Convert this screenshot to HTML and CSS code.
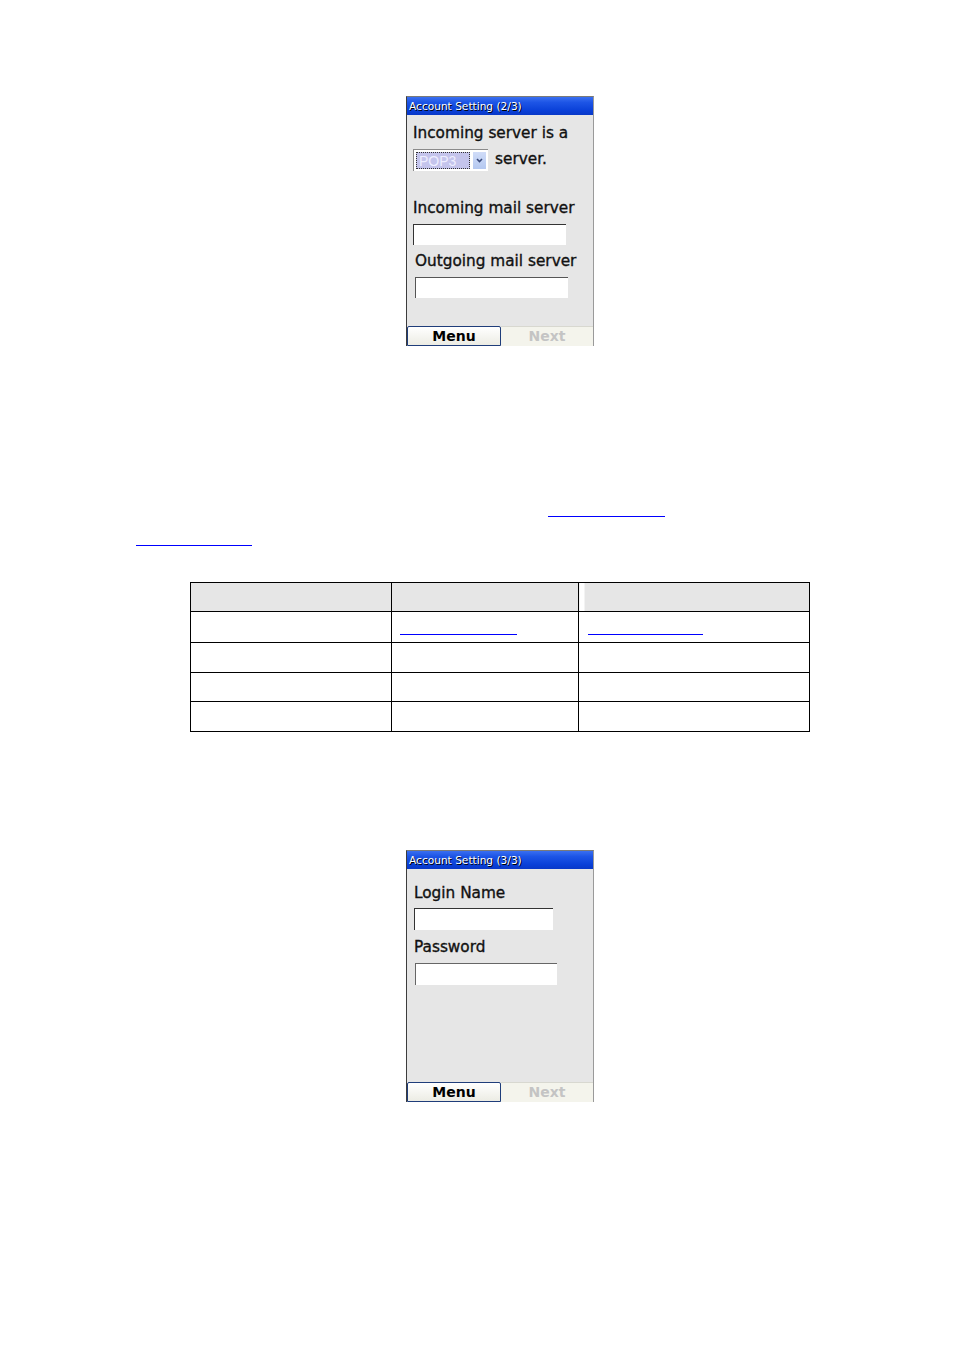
FILE: index.html
```html
<!DOCTYPE html>
<html>
<head>
<meta charset="utf-8">
<link rel="stylesheet" href="styles.css">
</head>
<body>
<div class="page">
  <div class="phone phone-a">
    <div class="titlebar">Account Setting (2/3)</div>
    <div class="screen">
      <div class="lbl l1">Incoming server is a</div>
      <div class="row-sel">
        <div class="select"><span class="sel-val">POP3</span><span class="sel-btn"><svg width="9" height="7" viewBox="0 0 9 7"><path d="M2 2 L4.5 4.5 L7 2" fill="none" stroke="#3a4a7a" stroke-width="1.6"/></svg></span></div>
        <span class="lbl sel-after">server.</span>
      </div>
      <div class="lbl l2">Incoming mail server</div>
      <div class="input in1"></div>
      <div class="lbl l3">Outgoing mail server</div>
      <div class="input in2"></div>
    </div>
    <div class="softkeys"><div class="sk sk-menu">Menu</div><div class="sk sk-next">Next</div></div>
  </div>

  <div class="links">
    <div class="link-line la"><span class="ulink"></span></div>
    <div class="link-line lb"><span class="ulink"></span></div>
  </div>

  <table class="tbl">
    <tr class="hdr"><td class="c1"></td><td class="c2"></td><td class="c3"></td></tr>
    <tr><td></td><td><span class="ulink t1"></span></td><td><span class="ulink t2"></span></td></tr>
    <tr><td></td><td></td><td></td></tr>
    <tr><td></td><td></td><td></td></tr>
    <tr><td></td><td></td><td></td></tr>
  </table>

  <div class="phone phone-b">
    <div class="titlebar">Account Setting (3/3)</div>
    <div class="screen">
      <div class="lbl m1">Login Name</div>
      <div class="input in3"></div>
      <div class="lbl m2">Password</div>
      <div class="input in4"></div>
    </div>
    <div class="softkeys"><div class="sk sk-menu">Menu</div><div class="sk sk-next">Next</div></div>
  </div>
</div>
</body>
</html>
```

FILE: styles.css
```css
html, body { margin: 0; padding: 0; background: #fff; }
.page { width: 954px; height: 1351px; position: relative; overflow: hidden; font-family: "DejaVu Sans", Verdana, sans-serif; }

.phone { margin-left: 406px; width: 188px; background: #e6e6e6; border-left: 1px solid #3c3c3c; border-right: 1px solid #9a9a9a; border-top: 1px solid #7a7a7a; box-sizing: border-box; display: flex; flex-direction: column; }
.phone-a { margin-top: 96px; height: 250px; }
.phone-b { position: absolute; top: 850px; left: 0; height: 252px; }

.titlebar { height: 18px; flex: none; background: linear-gradient(#3a6ff0 0%, #1d55e6 30%, #0a40d8 75%, #0838c8 100%); color: #fff; font-family: "DejaVu Sans", sans-serif; font-size: 10.6px; line-height: 18px; padding-left: 2px; text-shadow: 1px 1px 0 #000; white-space: nowrap; overflow: hidden; }
.screen { flex: 1; position: relative; }

.lbl { font-size: 15.3px; color: #111; line-height: 17px; white-space: nowrap; -webkit-text-stroke: 0.35px #111; }
.l1 { margin: 10px 0 0 6px; }
.row-sel { display: flex; align-items: center; margin: 7px 0 0 6px; }
.select { width: 75px; height: 22px; box-sizing: border-box; background: #fff; border-top: 1px solid #8a8a8a; border-left: 1px solid #8a8a8a; display: flex; padding: 2px; gap: 2px; }
.sel-val { width: 56px; box-sizing: border-box; background: #c4c4ec; border: 1px dotted #333; color: #eef; font-family: "Liberation Sans", Arial, sans-serif; font-size: 14px; line-height: 16px; padding-left: 2px; }
.sel-btn { width: 13px; background: linear-gradient(#d0dcf8, #b4c8f0); display: flex; align-items: center; justify-content: center; margin-left: 1px; }
.sel-after { margin-left: 7px; margin-top: -2px; }
.l2 { margin: 29px 0 0 6px; }
.input { height: 21px; background: #fff; border-top: 1px solid #333; border-left: 1px solid #333; box-sizing: border-box; }
.in1 { margin: 7px 0 0 6px; width: 153px; }
.l3 { margin: 8px 0 0 8px; }
.in2 { margin: 7px 0 0 8px; width: 153px; border-color: #555; }
.m1 { margin: 16px 0 0 7px; }
.in3 { margin: 6px 0 0 7px; width: 139px; height: 22px; }
.m2 { margin: 9px 0 0 7px; }
.in4 { margin: 7px 0 0 8px; width: 142px; height: 22px; border-color: #666; }

.softkeys { height: 20px; flex: none; display: flex; }
.sk { height: 20px; box-sizing: border-box; font-family: "DejaVu Sans", sans-serif; font-weight: bold; font-size: 14px; line-height: 19px; text-align: center; }
.sk-menu { width: 94px; border: 1px solid #1f3d7a; border-radius: 2px 2px 0 0; background: linear-gradient(#ffffff, #ecece4); color: #000; }
.sk-next { flex: 1; background: #f4f4ec; color: #c4c4c4; border-top: 1px solid #d8d8d0; }

.links { height: 200px; position: relative; }
.link-line { position: absolute; }
.ulink { display: block; height: 1px; background: #0000ff; }
.la { left: 548px; top: 170px; width: 117px; }
.la .ulink { width: 117px; }
.lb { left: 136px; top: 199px; width: 116px; }
.lb .ulink { width: 116px; }

.tbl { position: absolute; left: 190px; top: 582px; width: 620px; border-collapse: collapse; }
.tbl td { border: 1px solid #000; padding: 0; vertical-align: bottom; }
.tbl tr:nth-child(1) td { height: 28px; }
.tbl tr:nth-child(2) td { height: 30px; }
.tbl tr:nth-child(3) td { height: 29px; }
.tbl tr:nth-child(4) td { height: 28px; }
.tbl tr:nth-child(5) td { height: 29px; }
.tbl .c1 { width: 200px; }
.tbl .c2 { width: 186px; }
.hdr td { background: #e6e6e6; }
.hdr .c3 { background: linear-gradient(to right, #fff 0, #fff 5px, #e6e6e6 5px); }
.t1 { width: 117px; margin: 0 0 7px 8px; }
.t2 { width: 115px; margin: 0 0 7px 9px; }
```
